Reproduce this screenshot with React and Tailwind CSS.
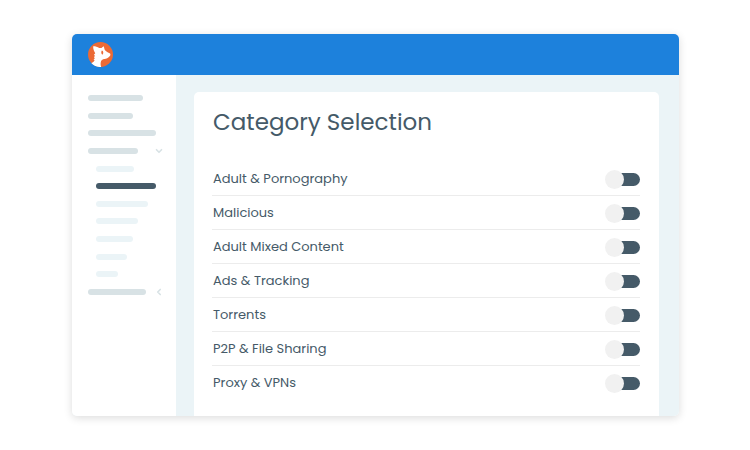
import { ChevronDown, ChevronLeft } from "lucide-react";

const categories = [
  "Adult & Pornography",
  "Malicious",
  "Adult Mixed Content",
  "Ads & Tracking",
  "Torrents",
  "P2P & File Sharing",
  "Proxy & VPNs",
];

const menuBars = [
  "w-[55px] bg-[#d8e2e5]",
  "w-[45px] bg-[#d8e2e5]",
  "w-[68px] bg-[#d8e2e5]",
  "w-[50px] bg-[#d8e2e5]",
  "ml-2 w-[38px] bg-[#ebf4f7]",
  "ml-2 w-[60px] bg-[#455a68]",
  "ml-2 w-[52px] bg-[#ebf4f7]",
  "ml-2 w-[42px] bg-[#ebf4f7]",
  "ml-2 w-[37px] bg-[#ebf4f7]",
  "ml-2 w-[31px] bg-[#ebf4f7]",
  "ml-2 w-[22px] bg-[#ebf4f7]",
  "w-[58px] bg-[#d8e2e5]",
];

function Logo() {
  return (
    <svg viewBox="0 0 76 76" className="size-[25px]" aria-hidden="true">
      <circle cx="38" cy="38" r="38" fill="#eb6a36" />
      <path
        d="M16 13 C23 13 29 15 34 18 L41 18 C43 16 46 14 48 13 C49 18 50 21 51 24 C55 29 61 32 67 35 C69 38 68 42 65 44 C61 49 56 51 50 52 C44 53 40 56 39 61 C38 66 38 71 40 76 C28 77 17 72 10 64 C16 62 19 59 20 55 L17 54 L21 49 L18 47 L21 42 L18 39 L22 34 C18 28 15 20 16 13 Z"
        fill="#fff"
      />
      <path d="M42 26 C47 27 48 34 44 39 C40 37 39 30 42 26 Z" fill="#eb6a36" />
    </svg>
  );
}

function Toggle({ id }) {
  return (
    <input
      id={id}
      type="checkbox"
      role="switch"
      className="relative mt-px h-[19px] w-[35px] shrink-0 cursor-pointer appearance-none before:absolute before:inset-y-[3px] before:right-0 before:left-2 before:rounded-full before:bg-[#455a68] after:absolute after:top-0 after:left-0 after:size-[19px] after:rounded-full after:bg-[#f1f1f1]"
    />
  );
}

export default function App() {
  return (
    <div className="min-h-screen bg-white py-[34px] pr-[71px] pl-[72px] font-[Poppins,Inter,sans-serif] text-[#455a68]">
      <div className="overflow-hidden rounded-[5px] shadow-[0_2px_8px_rgba(0,0,0,0.14)]">
        <header className="flex h-[41px] items-center bg-[#1d81dc] px-4">
          <Logo />
        </header>
        <div className="flex bg-[#ebf4f7]">
          <nav aria-label="Main" className="w-[104px] shrink-0 bg-white px-4 pt-5">
            <ul className="flex h-[200px] flex-col justify-between">
              {menuBars.map((bar, i) => (
                <li key={i} className="flex h-[6px] items-center justify-between">
                  <span className={`h-[6px] rounded-full ${bar}`} />
                  {i === 3 && <ChevronDown className="-mr-1 size-[10px] text-[#d8e2e5]" strokeWidth={4} />}
                  {i === 11 && <ChevronLeft className="-mr-1 size-[10px] text-[#d8e2e5]" strokeWidth={4} />}
                </li>
              ))}
            </ul>
          </nav>
          <main className="flex-1 pt-[17px] pr-5 pl-[18px]">
            <section className="rounded-t-[5px] bg-white pt-3 pr-[19px] pb-4 pl-[18px]">
              <h1 className="px-px text-[23px] leading-[36px]">Category Selection</h1>
              <ul className="pt-[22px]">
                {categories.map((name, i) => (
                  <li
                    key={name}
                    className="flex h-[34px] items-center justify-between border-b border-[#ececec] last:border-0"
                  >
                    <label htmlFor={`category-${i}`} className="pl-px text-[13px] leading-5">
                      {name}
                    </label>
                    <Toggle id={`category-${i}`} />
                  </li>
                ))}
              </ul>
            </section>
          </main>
        </div>
      </div>
    </div>
  );
}
